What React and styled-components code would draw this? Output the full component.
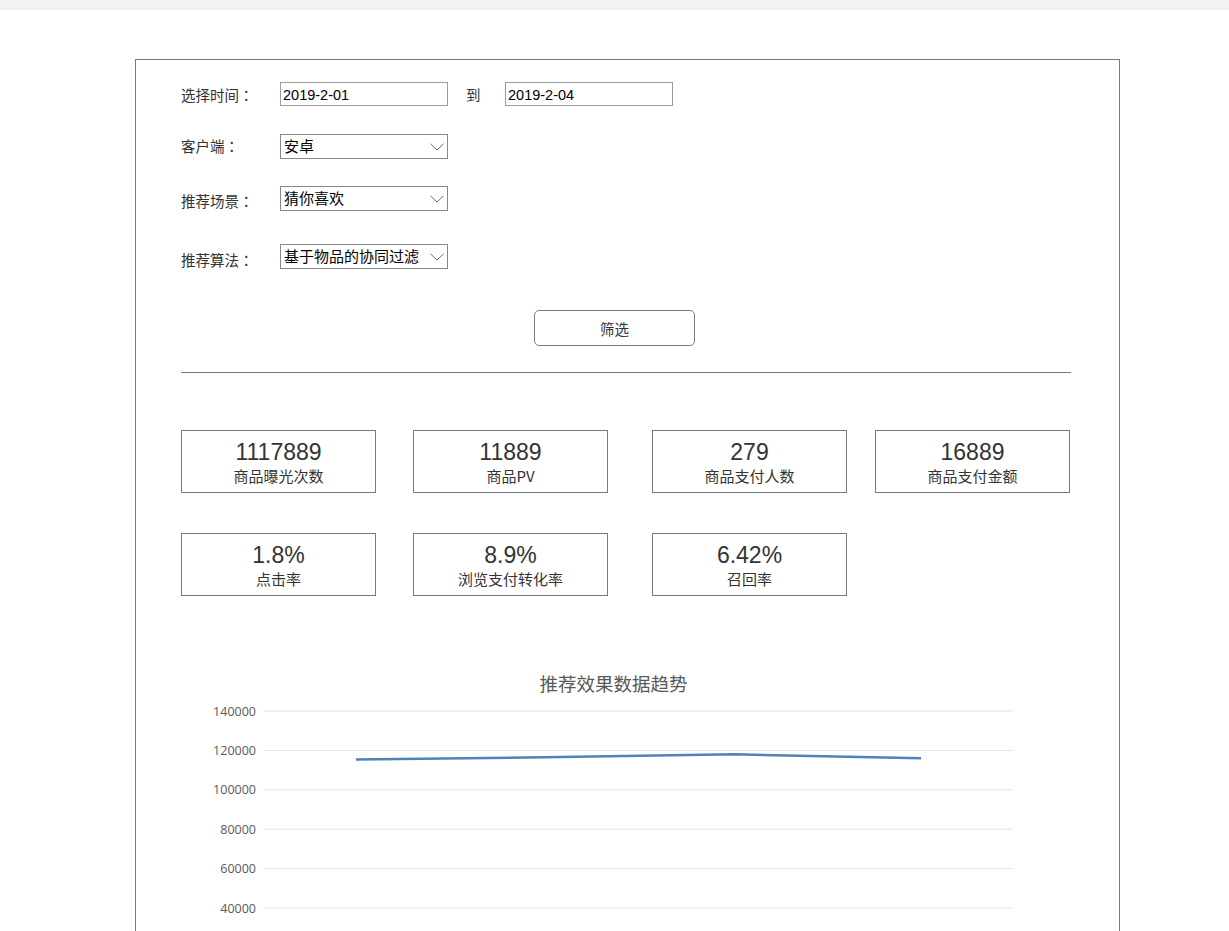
import React from 'react'
import styled, { createGlobalStyle } from 'styled-components'

const GlobalStyle = createGlobalStyle`
  html, body { margin: 0; padding: 0; overflow: hidden; background: #fff; }
  body { font-family: "Liberation Sans", "Noto Sans CJK SC", sans-serif; color: #333; }
`

const TopBar = styled.div`
  height: 10px;
  background: #f2f2f2;
`

const Panel = styled.div`
  margin: 49px 0 0 135px;
  width: 985px;
  height: 872px;
  box-sizing: border-box;
  border: 1px solid #797979;
  border-bottom: none;
  padding: 22px 48px 0 45px;
  overflow: hidden;
`

const FormRow = styled.div`
  display: flex;
  align-items: center;
  margin-top: ${(p) => p.$gap || 0}px;
  height: ${(p) => p.$h || 25}px;
`

const Label = styled.span`
  width: 99px;
  font-family: "Noto Sans CJK SC", sans-serif;
  font-size: 14.5px;
  color: #333;
  position: relative;
  top: ${(p) => p.$dy || 0}px;
`

const Colon = styled.span`
  font-family: "Noto Sans CJK TC", sans-serif;
`

const TextBox = styled.div`
  width: 168px;
  height: 24px;
  box-sizing: border-box;
  border: 1px solid #9b9b9b;
  padding: 1px 2px 0;
  font-size: 14.5px;
  line-height: 22px;
  color: #000;
`

const To = styled.span`
  width: 39px;
  margin-left: 18px;
  font-family: "Noto Sans CJK SC", sans-serif;
  font-size: 14.5px;
  color: #333;
`

const Select = styled.div`
  width: 168px;
  height: 25px;
  box-sizing: border-box;
  border: 1px solid #888;
  display: flex;
  align-items: center;
  justify-content: space-between;
  padding: 0 3px 2px 3px;
  font-family: "Noto Sans CJK SC", sans-serif;
  font-size: 15px;
  color: #000;
  white-space: nowrap;
  & svg { flex: none; margin-top: 2px; }
`

const FilterButton = styled.button`
  display: block;
  margin: 41px 0 0 353px;
  width: 161px;
  height: 36px;
  border: 1px solid #797979;
  border-radius: 5px;
  background: #fff;
  font-family: "Noto Sans CJK SC", sans-serif;
  font-size: 14.5px;
  color: #333;
`

const Divider = styled.hr`
  margin: 26px 0 0;
  border: none;
  border-top: 1px solid #797979;
  width: 890px;
`

const CardRow = styled.div`
  display: grid;
  grid-template-columns: 232px 239px 223px 195px;
  margin-top: ${(p) => p.$gap}px;
`

const Card = styled.div`
  width: 195px;
  height: 63px;
  box-sizing: border-box;
  border: 1px solid #797979;
  display: flex;
  flex-direction: column;
  align-items: center;
  padding-top: 8px;
`

const CardValue = styled.div`
  font-size: 23px;
  line-height: 26px;
  color: #333;
`

const CardLabel = styled.div`
  margin-top: 1px;
  font-family: "Noto Sans CJK SC", sans-serif;
  font-size: 15px;
  line-height: 19px;
  color: #333;
`

const ChartTitle = styled.div`
  margin-top: 75px;
  padding-right: 25px;
  text-align: center;
  font-family: "Noto Sans CJK SC", sans-serif;
  font-size: 18.5px;
  line-height: 24px;
  color: #595959;
`

const ChartSvg = styled.svg`
  display: block;
  margin-top: 5px;
`

const Chevron = () => (
  <svg width="14" height="8" viewBox="0 0 14 8">
    <path d="M0.5 0.8 L7 7 L13.5 0.8" fill="none" stroke="#6b6b6b" strokeWidth="1" />
  </svg>
)

const row1 = [
  ['1117889', '商品曝光次数'],
  ['11889', '商品PV'],
  ['279', '商品支付人数'],
  ['16889', '商品支付金额'],
]
const row2 = [
  ['1.8%', '点击率'],
  ['8.9%', '浏览支付转化率'],
  ['6.42%', '召回率'],
]

const ticks = [140000, 120000, 100000, 80000, 60000, 40000]
const points = [
  [175, 115400],
  [364, 116500],
  [554, 118000],
  [740, 116000],
]
const yOf = (v) => 11 + ((140000 - v) / 20000) * 39.4

const TrendChart = () => (
  <ChartSvg width="890" height="222" viewBox="0 0 890 222">
    {ticks.map((t) => (
      <g key={t}>
        <line x1="83" x2="832" y1={yOf(t)} y2={yOf(t)} stroke="#e3e3e3" strokeWidth="1" />
        <text
          x="75"
          y={yOf(t) + 4.5}
          textAnchor="end"
          fontSize="12.5"
          fill="#595959"
          fontFamily="'Open Sans', 'Liberation Sans', sans-serif"
        >
          {t}
        </text>
      </g>
    ))}
    <polyline
      points={points.map(([x, v]) => `${x},${yOf(v)}`).join(' ')}
      fill="none"
      stroke="#4f81bd"
      strokeWidth="2.5"
      strokeLinejoin="round"
    />
  </ChartSvg>
)

export default function App() {
  return (
    <>
      <GlobalStyle />
      <TopBar />
      <Panel>
        <FormRow $h={24}>
          <Label>选择时间<Colon>：</Colon></Label>
          <TextBox>2019-2-01</TextBox>
          <To>到</To>
          <TextBox>2019-2-04</TextBox>
        </FormRow>
        <FormRow $gap={28}>
          <Label $dy={-1}>客户端<Colon>：</Colon></Label>
          <Select>安卓<Chevron /></Select>
        </FormRow>
        <FormRow $gap={27}>
          <Label $dy={2}>推荐场景<Colon>：</Colon></Label>
          <Select>猜你喜欢<Chevron /></Select>
        </FormRow>
        <FormRow $gap={33}>
          <Label $dy={3}>推荐算法<Colon>：</Colon></Label>
          <Select>基于物品的协同过滤<Chevron /></Select>
        </FormRow>
        <FilterButton>筛选</FilterButton>
        <Divider />
        <CardRow $gap={57}>
          {row1.map(([v, l]) => (
            <Card key={l}>
              <CardValue>{v}</CardValue>
              <CardLabel>{l}</CardLabel>
            </Card>
          ))}
        </CardRow>
        <CardRow $gap={40}>
          {row2.map(([v, l]) => (
            <Card key={l}>
              <CardValue>{v}</CardValue>
              <CardLabel>{l}</CardLabel>
            </Card>
          ))}
        </CardRow>
        <ChartTitle>推荐效果数据趋势</ChartTitle>
        <TrendChart />
      </Panel>
    </>
  )
}
